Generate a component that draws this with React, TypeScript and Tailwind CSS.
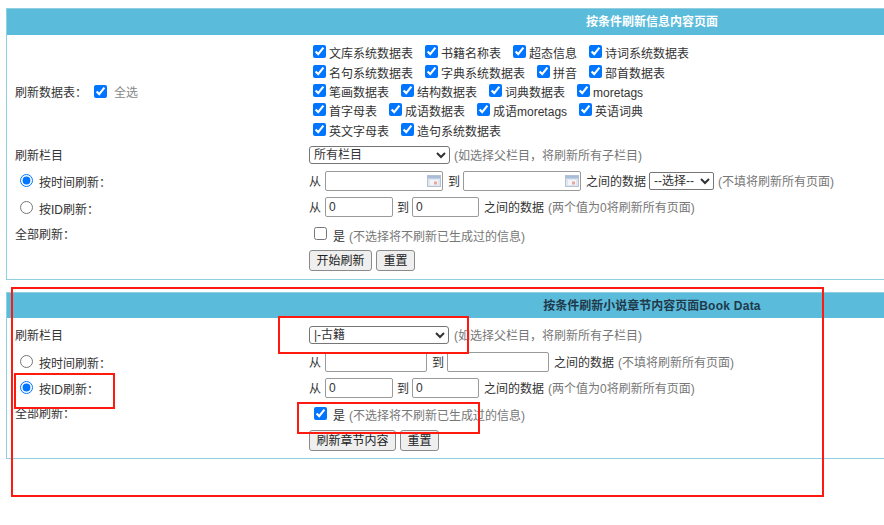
import type { ReactNode } from 'react'

const noop = () => {}

const TABLE_ROWS = [
  ['文库系统数据表', '书籍名称表', '超态信息', '诗词系统数据表'],
  ['名句系统数据表', '字典系统数据表', '拼音', '部首数据表'],
  ['笔画数据表', '结构数据表', '词典数据表', 'moretags'],
  ['首字母表', '成语数据表', '成语moretags', '英语词典'],
  ['英文字母表', '造句系统数据表'],
]

function Check({ checked = true }: { checked?: boolean }) {
  return <input type="checkbox" checked={checked} onChange={noop} className="w-[13px] h-[13px] flex-shrink-0" />
}

function Radio({ checked = false }: { checked?: boolean }) {
  return <input type="radio" checked={checked} onChange={noop} className="w-[13px] h-[13px] flex-shrink-0 -mt-[3px]" />
}

// text sits a pixel or so below the centre of its row
function Txt({ children }: { children: ReactNode }) {
  return <span className="pt-[2px]">{children}</span>
}

function Note({ children }: { children: ReactNode }) {
  return <span className="pt-[2px] text-[#777]">{children}</span>
}

function Btn({ children }: { children: ReactNode }) {
  return (
    <button className="h-[21px] px-[6.5px] bg-[#efefef] border border-[#8a8a8a] rounded-[3px] text-[#222] text-xs">
      {children}
    </button>
  )
}

function TextBox({ value = '', width, calendar }: { value?: string; width: string; calendar?: boolean }) {
  return (
    <span className={`relative flex-shrink-0 ${width}`}>
      <input
        value={value}
        onChange={noop}
        className="block w-full h-[20px] px-[3px] border border-[#9a9a9a] rounded-[2px] bg-white text-xs"
      />
      {calendar && (
        <svg className="absolute right-[2px] top-[3px]" width="14" height="14" viewBox="0 0 14 14">
          <rect x="0.5" y="1.5" width="13" height="11" fill="#dfe6f0" stroke="#b6c2d4" />
          <rect x="1" y="2" width="12" height="2.5" fill="#a9bcd8" />
          <rect x="3" y="6" width="8" height="5" fill="#f3f5f9" />
          <rect x="7" y="7.5" width="3" height="3" fill="#e8a79a" />
        </svg>
      )}
    </span>
  )
}

function Row({ height, label, children }: { height: string; label?: ReactNode; children?: ReactNode }) {
  return (
    <div className={`flex items-center ${height}`}>
      <div className="w-[302px] pl-[8px] pt-[2px] flex-shrink-0 flex items-center">{label}</div>
      <div className="flex items-center flex-1 min-w-0">{children}</div>
    </div>
  )
}

function RadioLabel({ text, checked }: { text: string; checked?: boolean }) {
  return (
    <span className="flex items-center pl-[5px] gap-[6px]">
      <Radio checked={checked} />
      <span className="mt-[2px]">{text}</span>
    </span>
  )
}

function IdRange() {
  return (
    <>
      <Txt>从</Txt>
      <span className="w-[4px]" />
      <TextBox value="0" width="w-[68px]" />
      <span className="w-[4px]" />
      <Txt>到</Txt>
      <span className="w-[3px]" />
      <TextBox value="0" width="w-[67px]" />
      <span className="w-[5px]" />
      <Txt>之间的数据</Txt>
      <span className="w-[4px]" />
      <Note>(两个值为0将刷新所有页面)</Note>
    </>
  )
}

function AllRefresh({ checked }: { checked: boolean }) {
  return (
    <span className="flex items-center pl-[5px]">
      <Check checked={checked} />
      <span className="ml-[6px] mt-[6px]">是</span>
      <span className="ml-[4px] mt-[4px] flex">
        <Note>(不选择将不刷新已生成过的信息)</Note>
      </span>
    </span>
  )
}

function Panel({ title, titleColor, headerHeight, children }: { title: ReactNode; titleColor: string; headerHeight: string; children: ReactNode }) {
  return (
    <div className="ml-[6px] w-[1292px] border border-[#8fcfe0]">
      <div className={`flex items-center justify-center bg-[#5bbbdb] font-bold ${headerHeight} ${titleColor}`}>
        <span>{title}</span>
      </div>
      {children}
    </div>
  )
}

export default function App() {
  return (
    <div
      className="relative w-[884px] h-[525px] overflow-hidden bg-white text-xs text-[#333] pt-[8px]"
      style={{ fontFamily: '"Liberation Sans", "Noto Sans CJK SC", sans-serif' }}
    >
      <Panel title="按条件刷新信息内容页面" titleColor="text-white" headerHeight="h-[26px]">
        <Row
          height="h-[110px] pt-[4px]"
          label={
            <span className="flex items-center">
              <span>刷新数据表：</span>
              <span className="ml-[7px] -mt-[4px] flex"><Check /></span>
              <span className="ml-[7px] text-[#888]">全选</span>
            </span>
          }
        >
          <div className="pl-[4px] flex flex-col">
            {TABLE_ROWS.map((row, r) => (
              <div key={r} className="flex items-center gap-[12px] h-[19.3px]">
                {row.map(name => (
                  <span key={name} className="flex items-center gap-[3px]">
                    <span className="-mt-[3px] flex"><Check /></span>
                    <span className="mt-[2px]">{name}</span>
                  </span>
                ))}
              </div>
            ))}
          </div>
        </Row>
        <Row height="h-[20px]" label="刷新栏目">
          <select className="w-[141px] h-[18px] border border-[#767676] rounded-[3px] text-xs bg-white">
            <option>所有栏目</option>
          </select>
          <span className="w-[4px]" />
          <Note>(如选择父栏目，将刷新所有子栏目)</Note>
        </Row>
        <Row height="h-[31px]" label={<RadioLabel text="按时间刷新：" checked />}>
          <Txt>从</Txt>
          <span className="w-[4px]" />
          <TextBox width="w-[118px]" calendar />
          <span className="w-[5px]" />
          <Txt>到</Txt>
          <span className="w-[3px]" />
          <TextBox width="w-[118px]" calendar />
          <span className="w-[5px]" />
          <Txt>之间的数据</Txt>
          <span className="w-[3px]" />
          <select className="w-[65px] h-[18px] border border-[#767676] rounded-[2px] text-xs bg-white">
            <option>--选择--</option>
          </select>
          <span className="w-[4px]" />
          <Note>(不填将刷新所有页面)</Note>
        </Row>
        <Row height="h-[22px]" label={<span className="flex pt-[2px]"><RadioLabel text="按ID刷新：" /></span>}>
          <IdRange />
        </Row>
        <Row height="h-[31px]" label="全部刷新：">
          <AllRefresh checked={false} />
        </Row>
        <Row height="h-[23px]">
          <span className="flex gap-[4px]">
            <Btn>开始刷新</Btn>
            <Btn>重置</Btn>
          </span>
        </Row>
        <div className="h-[7px]" />
      </Panel>

      <div className="h-[12px]" />

      <Panel
        title={<>按条件刷新小说章节内容页面<span className="tracking-[0.25px]">Book Data</span></>}
        titleColor="text-[#1f3a4a]"
        headerHeight="h-[25px]"
      >
        <Row height="h-[33px]" label="刷新栏目">
          <select className="w-[140px] h-[18px] border border-[#767676] rounded-[3px] text-xs bg-white">
            <option>|-古籍</option>
          </select>
          <span className="w-[5px]" />
          <Note>(如选择父栏目，将刷新所有子栏目)</Note>
        </Row>
        <Row height="h-[21px]" label={<RadioLabel text="按时间刷新：" />}>
          <Txt>从</Txt>
          <span className="w-[4px]" />
          <TextBox width="w-[102px]" />
          <span className="w-[5px]" />
          <Txt>到</Txt>
          <span className="w-[3px]" />
          <TextBox width="w-[102px]" />
          <span className="w-[5px]" />
          <Txt>之间的数据</Txt>
          <span className="w-[4px]" />
          <Note>(不填将刷新所有页面)</Note>
        </Row>
        <Row height="h-[31px]" label={<RadioLabel text="按ID刷新：" checked />}>
          <IdRange />
        </Row>
        <Row height="h-[20px]" label="全部刷新：">
          <AllRefresh checked />
        </Row>
        <Row height="h-[35px]">
          <span className="flex gap-[4px]">
            <Btn>刷新章节内容</Btn>
            <Btn>重置</Btn>
          </span>
        </Row>
      </Panel>

      {/* red annotation boxes drawn over the screenshot */}
      <div className="absolute left-[11px] top-[287px] w-[813px] h-[210px] border-2 border-[#ff1a10]" />
      <div className="absolute left-[278px] top-[316px] w-[191px] h-[38px] border-2 border-[#ff1a10]" />
      <div className="absolute left-[14px] top-[373px] w-[101px] h-[36px] border-2 border-[#ff1a10]" />
      <div className="absolute left-[297px] top-[402px] w-[183px] h-[32px] border-2 border-[#ff1a10]" />
    </div>
  )
}
